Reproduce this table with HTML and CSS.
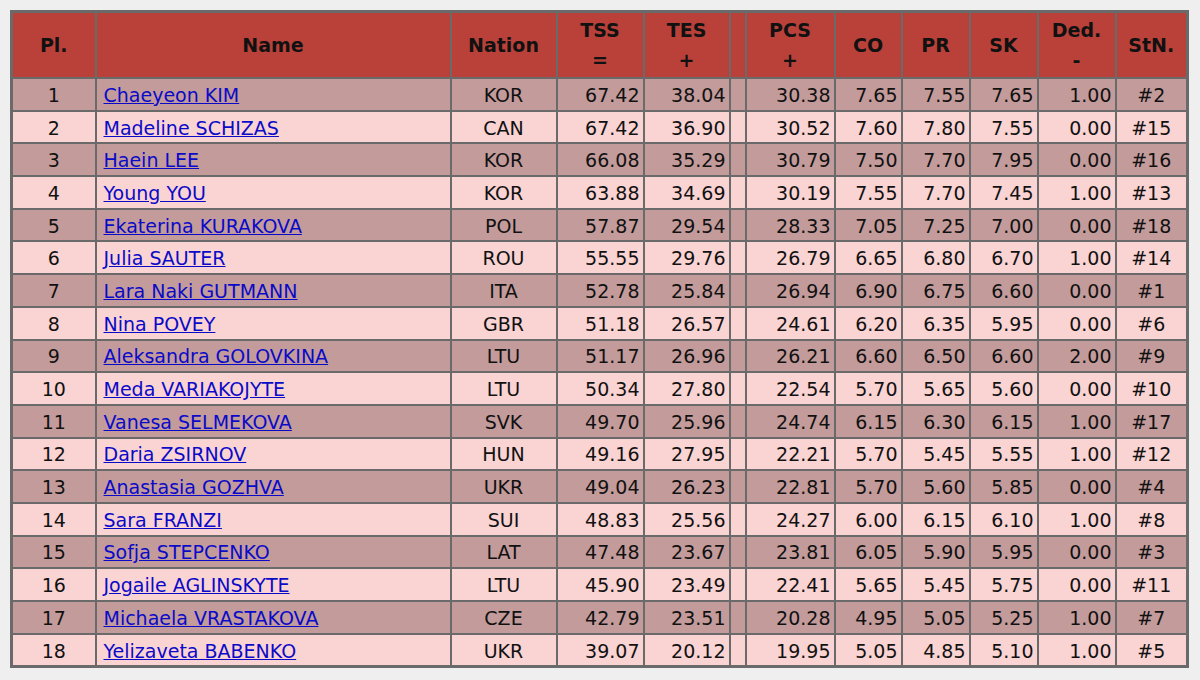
FILE: index.html
```html
<!DOCTYPE html>
<html>
<head>
<meta charset="utf-8">
<title>Results</title>
<link rel="stylesheet" href="styles.css">
</head>
<body>
<table class="results">
<colgroup>
<col class="c-pl"><col class="c-name"><col class="c-nat"><col class="c-tss"><col class="c-tes"><col class="c-gap"><col class="c-pcs"><col class="c-co"><col class="c-pr"><col class="c-sk"><col class="c-ded"><col class="c-stn">
</colgroup>
<thead>
<tr>
<th>Pl.</th><th>Name</th><th>Nation</th><th>TSS<br>=</th><th>TES<br>+</th><th></th><th>PCS<br>+</th><th>CO</th><th>PR</th><th>SK</th><th>Ded.<br>-</th><th>StN.</th>
</tr>
</thead>
<tbody>
<tr class="odd"><td class="ctr">1</td><td class="name"><a href="#">Chaeyeon KIM</a></td><td class="ctr">KOR</td><td class="num">67.42</td><td class="num">38.04</td><td></td><td class="num">30.38</td><td class="num">7.65</td><td class="num">7.55</td><td class="num">7.65</td><td class="num">1.00</td><td class="ctr">#2</td></tr>
<tr class="even"><td class="ctr">2</td><td class="name"><a href="#">Madeline SCHIZAS</a></td><td class="ctr">CAN</td><td class="num">67.42</td><td class="num">36.90</td><td></td><td class="num">30.52</td><td class="num">7.60</td><td class="num">7.80</td><td class="num">7.55</td><td class="num">0.00</td><td class="ctr">#15</td></tr>
<tr class="odd"><td class="ctr">3</td><td class="name"><a href="#">Haein LEE</a></td><td class="ctr">KOR</td><td class="num">66.08</td><td class="num">35.29</td><td></td><td class="num">30.79</td><td class="num">7.50</td><td class="num">7.70</td><td class="num">7.95</td><td class="num">0.00</td><td class="ctr">#16</td></tr>
<tr class="even"><td class="ctr">4</td><td class="name"><a href="#">Young YOU</a></td><td class="ctr">KOR</td><td class="num">63.88</td><td class="num">34.69</td><td></td><td class="num">30.19</td><td class="num">7.55</td><td class="num">7.70</td><td class="num">7.45</td><td class="num">1.00</td><td class="ctr">#13</td></tr>
<tr class="odd"><td class="ctr">5</td><td class="name"><a href="#">Ekaterina KURAKOVA</a></td><td class="ctr">POL</td><td class="num">57.87</td><td class="num">29.54</td><td></td><td class="num">28.33</td><td class="num">7.05</td><td class="num">7.25</td><td class="num">7.00</td><td class="num">0.00</td><td class="ctr">#18</td></tr>
<tr class="even"><td class="ctr">6</td><td class="name"><a href="#">Julia SAUTER</a></td><td class="ctr">ROU</td><td class="num">55.55</td><td class="num">29.76</td><td></td><td class="num">26.79</td><td class="num">6.65</td><td class="num">6.80</td><td class="num">6.70</td><td class="num">1.00</td><td class="ctr">#14</td></tr>
<tr class="odd"><td class="ctr">7</td><td class="name"><a href="#">Lara Naki GUTMANN</a></td><td class="ctr">ITA</td><td class="num">52.78</td><td class="num">25.84</td><td></td><td class="num">26.94</td><td class="num">6.90</td><td class="num">6.75</td><td class="num">6.60</td><td class="num">0.00</td><td class="ctr">#1</td></tr>
<tr class="even"><td class="ctr">8</td><td class="name"><a href="#">Nina POVEY</a></td><td class="ctr">GBR</td><td class="num">51.18</td><td class="num">26.57</td><td></td><td class="num">24.61</td><td class="num">6.20</td><td class="num">6.35</td><td class="num">5.95</td><td class="num">0.00</td><td class="ctr">#6</td></tr>
<tr class="odd"><td class="ctr">9</td><td class="name"><a href="#">Aleksandra GOLOVKINA</a></td><td class="ctr">LTU</td><td class="num">51.17</td><td class="num">26.96</td><td></td><td class="num">26.21</td><td class="num">6.60</td><td class="num">6.50</td><td class="num">6.60</td><td class="num">2.00</td><td class="ctr">#9</td></tr>
<tr class="even"><td class="ctr">10</td><td class="name"><a href="#">Meda VARIAKOJYTE</a></td><td class="ctr">LTU</td><td class="num">50.34</td><td class="num">27.80</td><td></td><td class="num">22.54</td><td class="num">5.70</td><td class="num">5.65</td><td class="num">5.60</td><td class="num">0.00</td><td class="ctr">#10</td></tr>
<tr class="odd"><td class="ctr">11</td><td class="name"><a href="#">Vanesa SELMEKOVA</a></td><td class="ctr">SVK</td><td class="num">49.70</td><td class="num">25.96</td><td></td><td class="num">24.74</td><td class="num">6.15</td><td class="num">6.30</td><td class="num">6.15</td><td class="num">1.00</td><td class="ctr">#17</td></tr>
<tr class="even"><td class="ctr">12</td><td class="name"><a href="#">Daria ZSIRNOV</a></td><td class="ctr">HUN</td><td class="num">49.16</td><td class="num">27.95</td><td></td><td class="num">22.21</td><td class="num">5.70</td><td class="num">5.45</td><td class="num">5.55</td><td class="num">1.00</td><td class="ctr">#12</td></tr>
<tr class="odd"><td class="ctr">13</td><td class="name"><a href="#">Anastasia GOZHVA</a></td><td class="ctr">UKR</td><td class="num">49.04</td><td class="num">26.23</td><td></td><td class="num">22.81</td><td class="num">5.70</td><td class="num">5.60</td><td class="num">5.85</td><td class="num">0.00</td><td class="ctr">#4</td></tr>
<tr class="even"><td class="ctr">14</td><td class="name"><a href="#">Sara FRANZI</a></td><td class="ctr">SUI</td><td class="num">48.83</td><td class="num">25.56</td><td></td><td class="num">24.27</td><td class="num">6.00</td><td class="num">6.15</td><td class="num">6.10</td><td class="num">1.00</td><td class="ctr">#8</td></tr>
<tr class="odd"><td class="ctr">15</td><td class="name"><a href="#">Sofja STEPCENKO</a></td><td class="ctr">LAT</td><td class="num">47.48</td><td class="num">23.67</td><td></td><td class="num">23.81</td><td class="num">6.05</td><td class="num">5.90</td><td class="num">5.95</td><td class="num">0.00</td><td class="ctr">#3</td></tr>
<tr class="even"><td class="ctr">16</td><td class="name"><a href="#">Jogaile AGLINSKYTE</a></td><td class="ctr">LTU</td><td class="num">45.90</td><td class="num">23.49</td><td></td><td class="num">22.41</td><td class="num">5.65</td><td class="num">5.45</td><td class="num">5.75</td><td class="num">0.00</td><td class="ctr">#11</td></tr>
<tr class="odd"><td class="ctr">17</td><td class="name"><a href="#">Michaela VRASTAKOVA</a></td><td class="ctr">CZE</td><td class="num">42.79</td><td class="num">23.51</td><td></td><td class="num">20.28</td><td class="num">4.95</td><td class="num">5.05</td><td class="num">5.25</td><td class="num">1.00</td><td class="ctr">#7</td></tr>
<tr class="even"><td class="ctr">18</td><td class="name"><a href="#">Yelizaveta BABENKO</a></td><td class="ctr">UKR</td><td class="num">39.07</td><td class="num">20.12</td><td></td><td class="num">19.95</td><td class="num">5.05</td><td class="num">4.85</td><td class="num">5.10</td><td class="num">1.00</td><td class="ctr">#5</td></tr>
</tbody>
</table>
</body>
</html>
```

FILE: styles.css
```css
html, body {
  margin: 0;
  padding: 0;
  background: #efefef;
}
body {
  padding: 10px;
  font-family: "DejaVu Sans", Verdana, sans-serif;
  font-size: 19px;
  color: #111;
}
.results {
  table-layout: fixed;
  border-collapse: collapse;
  width: 1179px;
  border: 3px solid #6a6a6a;
}
.c-pl { width: 84px; }
.c-name { width: 355px; }
.c-nat { width: 106px; }
.c-tss { width: 87px; }
.c-tes { width: 86px; }
.c-gap { width: 16px; }
.c-pcs { width: 89px; }
.c-co { width: 67px; }
.c-pr { width: 68px; }
.c-sk { width: 68px; }
.c-ded { width: 78px; }
.c-stn { width: 72px; }

.results th {
  background: #b9413a;
  color: #111;
  font-weight: bold;
  text-align: center;
  vertical-align: middle;
  line-height: 30px;
  height: 64px;
  padding: 0 2px;
  border: 2px solid #6a6a6a;
}
.results td {
  border: 2px solid #6a6a6a;
  height: 29.7px;
  padding: 1px 3px 0;
  line-height: 22px;
  white-space: nowrap;
  overflow: hidden;
}
.results tr.odd td { background: #c39b9b; }
.results tr.even td { background: #fad3d3; }
.results td.ctr { text-align: center; }
.results td.num { text-align: right; }
.results td.name { padding-left: 7px; text-align: left; }
.results a { color: #0a0ac8; text-decoration: underline; }
```
